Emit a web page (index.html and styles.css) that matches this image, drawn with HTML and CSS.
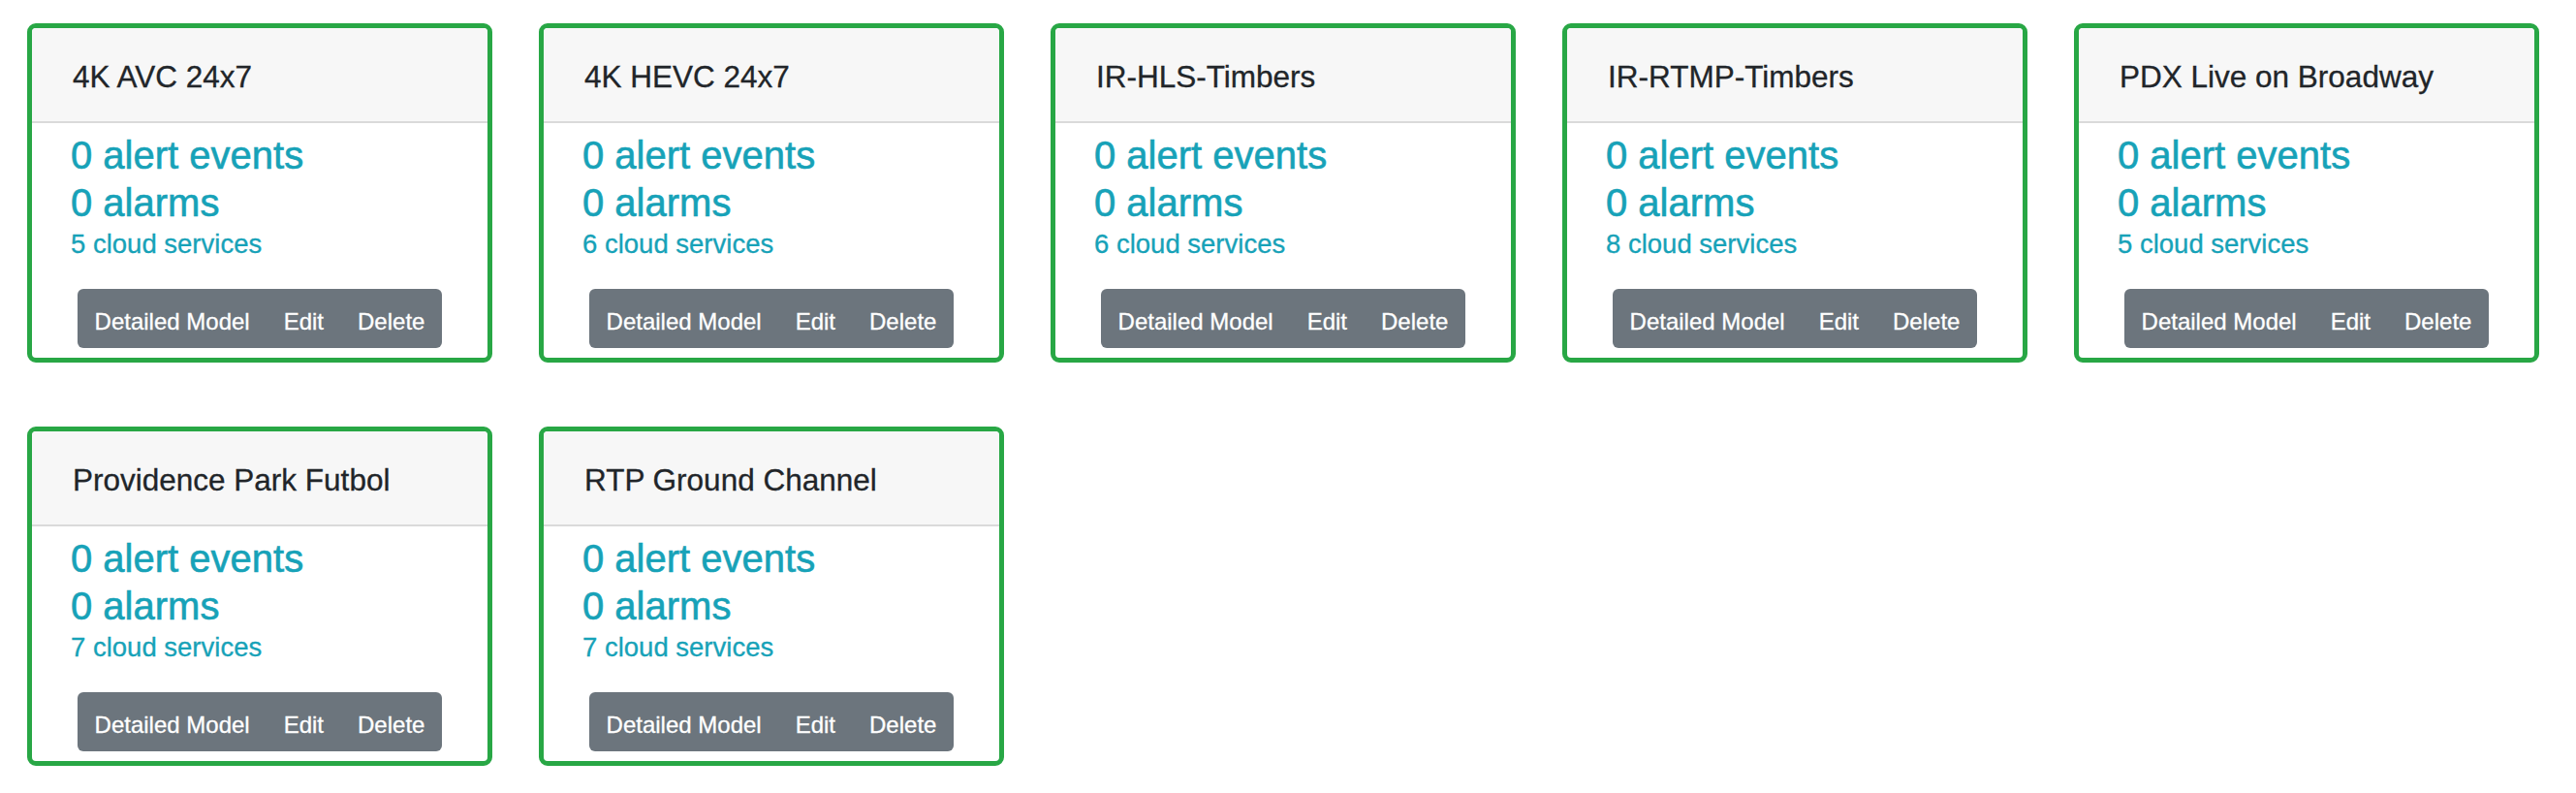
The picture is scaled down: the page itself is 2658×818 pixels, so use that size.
FILE: index.html
```
<!DOCTYPE html>
<html lang="en">
<head>
<meta charset="utf-8">
<title>Channels</title>
<link rel="stylesheet" href="styles.css">
</head>
<body>
<div class="grid">
  <div class="card">
    <div class="card-header">4K AVC 24x7</div>
    <div class="card-body">
      <div class="big">0 alert events</div>
      <div class="big">0 alarms</div>
      <div class="small">5 cloud services</div>
      <div class="btn-group"><span class="btn">Detailed Model</span><span class="btn">Edit</span><span class="btn">Delete</span></div>
    </div>
  </div>
  <div class="card">
    <div class="card-header">4K HEVC 24x7</div>
    <div class="card-body">
      <div class="big">0 alert events</div>
      <div class="big">0 alarms</div>
      <div class="small">6 cloud services</div>
      <div class="btn-group"><span class="btn">Detailed Model</span><span class="btn">Edit</span><span class="btn">Delete</span></div>
    </div>
  </div>
  <div class="card">
    <div class="card-header">IR-HLS-Timbers</div>
    <div class="card-body">
      <div class="big">0 alert events</div>
      <div class="big">0 alarms</div>
      <div class="small">6 cloud services</div>
      <div class="btn-group"><span class="btn">Detailed Model</span><span class="btn">Edit</span><span class="btn">Delete</span></div>
    </div>
  </div>
  <div class="card">
    <div class="card-header">IR-RTMP-Timbers</div>
    <div class="card-body">
      <div class="big">0 alert events</div>
      <div class="big">0 alarms</div>
      <div class="small">8 cloud services</div>
      <div class="btn-group"><span class="btn">Detailed Model</span><span class="btn">Edit</span><span class="btn">Delete</span></div>
    </div>
  </div>
  <div class="card">
    <div class="card-header">PDX Live on Broadway</div>
    <div class="card-body">
      <div class="big">0 alert events</div>
      <div class="big">0 alarms</div>
      <div class="small">5 cloud services</div>
      <div class="btn-group"><span class="btn">Detailed Model</span><span class="btn">Edit</span><span class="btn">Delete</span></div>
    </div>
  </div>
  <div class="card">
    <div class="card-header">Providence Park Futbol</div>
    <div class="card-body">
      <div class="big">0 alert events</div>
      <div class="big">0 alarms</div>
      <div class="small">7 cloud services</div>
      <div class="btn-group"><span class="btn">Detailed Model</span><span class="btn">Edit</span><span class="btn">Delete</span></div>
    </div>
  </div>
  <div class="card">
    <div class="card-header">RTP Ground Channel</div>
    <div class="card-body">
      <div class="big">0 alert events</div>
      <div class="big">0 alarms</div>
      <div class="small">7 cloud services</div>
      <div class="btn-group"><span class="btn">Detailed Model</span><span class="btn">Edit</span><span class="btn">Delete</span></div>
    </div>
  </div>
</div>
</body>
</html>
```
FILE: styles.css
```
html, body {
  margin: 0;
  padding: 0;
  background: #ffffff;
}
body {
  font-family: "Liberation Sans", Arial, Helvetica, sans-serif;
  color: #212529;
}
.grid {
  display: grid;
  grid-template-columns: repeat(5, 480px);
  column-gap: 48px;
  row-gap: 66px;
  padding: 24px 0 0 28px;
}
.card {
  box-sizing: border-box;
  width: 480px;
  height: 350px;
  border: 5px solid #28a745;
  border-radius: 9px;
  background: #ffffff;
  overflow: hidden;
}
.card-header {
  background: #f7f7f7;
  border-bottom: 2px solid #dadada;
  font-size: 31.5px;
  line-height: 40px;
  padding: 30px 0 26px 42px;
  color: #212529;
  white-space: nowrap;
  -webkit-text-stroke: 0.3px #212529;
}
.card-body {
  padding: 9px 40px 0 40px;
  display: flex;
  flex-direction: column;
}
.big {
  font-size: 40px;
  line-height: 49px;
  color: #17a2b8;
  white-space: nowrap;
  -webkit-text-stroke: 0.6px #17a2b8;
}
.small {
  font-size: 27.5px;
  line-height: 33px;
  padding-top: 1px;
  color: #17a2b8;
  white-space: nowrap;
  -webkit-text-stroke: 0.3px #17a2b8;
}
.btn-group {
  align-self: center;
  display: flex;
  margin-top: 30px;
  background: #6c757d;
  border-radius: 6px;
}
.btn {
  color: #ffffff;
  font-size: 24px;
  line-height: 25px;
  padding: 21px 17.5px 15px;
  white-space: nowrap;
  -webkit-text-stroke: 0.3px #ffffff;
}
```
